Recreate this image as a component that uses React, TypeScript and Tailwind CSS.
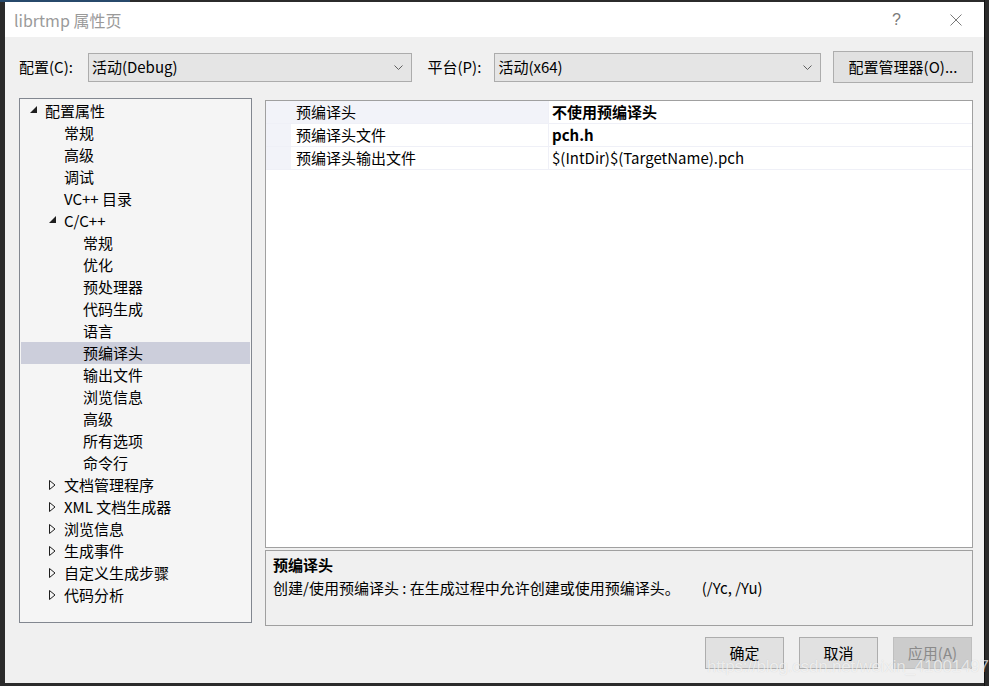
import React from "react";

const FONT = "font-['Noto_Sans_CJK_SC','Microsoft_YaHei',sans-serif]";

type Node = { label: string; level: number; toggle?: "open" | "closed"; selected?: boolean };

const tree: Node[] = [
  { label: "配置属性", level: 1, toggle: "open" },
  { label: "常规", level: 2 },
  { label: "高级", level: 2 },
  { label: "调试", level: 2 },
  { label: "VC++ 目录", level: 2 },
  { label: "C/C++", level: 2, toggle: "open" },
  { label: "常规", level: 3 },
  { label: "优化", level: 3 },
  { label: "预处理器", level: 3 },
  { label: "代码生成", level: 3 },
  { label: "语言", level: 3 },
  { label: "预编译头", level: 3, selected: true },
  { label: "输出文件", level: 3 },
  { label: "浏览信息", level: 3 },
  { label: "高级", level: 3 },
  { label: "所有选项", level: 3 },
  { label: "命令行", level: 3 },
  { label: "文档管理程序", level: 2, toggle: "closed" },
  { label: "XML 文档生成器", level: 2, toggle: "closed" },
  { label: "浏览信息", level: 2, toggle: "closed" },
  { label: "生成事件", level: 2, toggle: "closed" },
  { label: "自定义生成步骤", level: 2, toggle: "closed" },
  { label: "代码分析", level: 2, toggle: "closed" },
];

const props = [
  { name: "预编译头", value: "不使用预编译头", bold: true, active: true },
  { name: "预编译头文件", value: "pch.h", bold: true },
  { name: "预编译头输出文件", value: "$(IntDir)$(TargetName).pch" },
];

function Toggle({ kind }: { kind?: "open" | "closed" }) {
  if (kind === "open")
    return (
      <svg width={8} height={8} viewBox="0 0 8 8" className="-mt-[2px]">
        <polygon points="7,0 7,7 0,7" fill="#1e1e1e" />
      </svg>
    );
  if (kind === "closed")
    return (
      <svg width={7} height={10} viewBox="0 0 7 10">
        <polygon points="0.5,0.5 6,5 0.5,9.5" fill="none" stroke="#1e1e1e" strokeWidth={1} />
      </svg>
    );
  return null;
}

function Chevron() {
  return (
    <svg width={9} height={5} viewBox="0 0 9 5">
      <polyline points="0.5,0.5 4.5,4.5 8.5,0.5" fill="none" stroke="#5f5f5f" strokeWidth={1} />
    </svg>
  );
}

function Select({ value, width }: { value: string; width: string }) {
  return (
    <div className={`${width} h-[29px] bg-[#e5e5e5] border border-[#acacac] flex items-center justify-between pl-[3px] pr-[8px]`}>
      <span className="text-[15px] text-black">{value}</span>
      <Chevron />
    </div>
  );
}

function Button({ label, disabled, width }: { label: string; disabled?: boolean; width: string }) {
  return (
    <div
      className={`${width} h-[32px] border flex items-center justify-center text-[15px] ${
        disabled ? "bg-[#cccccc] border-[#bfbfbf] text-[#8a8a8a]" : "bg-[#e1e1e1] border-[#adadad] text-black"
      }`}
    >
      {label}
    </div>
  );
}

export default function App() {
  return (
    <div className={`relative w-[989px] h-[686px] overflow-hidden bg-[#2b2b2b] pt-[2px] pl-[5px] ${FONT}`}>
      {/* background window bits */}
      <div className="absolute left-0 top-0 w-[130px] h-[2px] bg-[#27496b]" />
      <div className="absolute left-[984px] top-0 w-px h-[686px] bg-[#111111]" />

      <div className="w-[979px] h-[681px] flex flex-col bg-[#f0f0f0]">
        {/* title bar */}
        <div className="h-[35px] bg-white flex items-center justify-between pl-[9px] pr-[22px] shrink-0">
          <span className="text-[16px] text-[#9a9a9a]">librtmp 属性页</span>
          <div className="flex items-center gap-[49px] text-[#7a7a7a]">
            <span className="text-[16px] font-['Liberation_Sans',sans-serif] font-light">?</span>
            <svg width={12} height={12} viewBox="0 0 12 12">
              <path d="M0.5 0.5L11.5 11.5M11.5 0.5L0.5 11.5" stroke="#7a7a7a" strokeWidth={1} />
            </svg>
          </div>
        </div>

        <div className="flex-1 flex flex-col pl-[14px] pr-[11px] pt-[15px]">
          {/* config row */}
          <div className="h-[30px] flex items-center text-[15px] text-black">
            <span className="w-[69px]">配置(C):</span>
            <Select value="活动(Debug)" width="w-[324px]" />
            <span className="w-[67px] ml-[16px]">平台(P):</span>
            <Select value="活动(x64)" width="w-[327px]" />
            <div className="ml-[12px]">
              <Button label="配置管理器(O)..." width="w-[140px]" />
            </div>
          </div>

          <div className="flex mt-[16px] gap-[13px]">
            {/* tree */}
            <div className="w-[233px] h-[525px] border border-[#828790] bg-[#f5f5f5] pt-[1px]">
              {tree.map((n, i) => (
                <div
                  key={i}
                  className={`h-[22px] mx-px flex items-center text-[15px] text-black ${n.selected ? "bg-[#cccedb]" : ""}`}
                >
                  <div className={n.level === 1 ? "w-[9px]" : n.level === 2 ? "w-[28px]" : "w-[47px]"} />
                  <div className="w-[15px] flex items-center">
                    <Toggle kind={n.toggle} />
                  </div>
                  <span>{n.label}</span>
                </div>
              ))}
            </div>

            {/* grid + description */}
            <div className="flex-1 flex flex-col pt-[2px]">
              <div className="h-[448px] border border-[#a0a0a0] bg-white">
                {props.map((p, i) => (
                  <div key={i} className="h-[23px] flex border-b border-[#eff0f7] text-[15px] text-black">
                    <div className="w-[25px] bg-[#f2f3f9]" />
                    <div
                      className={`w-[258px] flex items-center pl-[5px] border-r border-[#eff0f7] ${p.active ? "bg-[#f2f3f9]" : ""}`}
                    >
                      {p.name}
                    </div>
                    <div className={`flex-1 flex items-center pl-[3px] ${p.bold ? "font-bold" : ""}`}>{p.value}</div>
                  </div>
                ))}
              </div>
              <div className="mt-[2px] h-[76px] border border-[#a0a0a0] bg-[#f0f0f0] px-[7px] pt-[3px] text-[15px] text-black">
                <div className="font-bold h-[22px] flex items-center">预编译头</div>
                <div className="h-[24px] flex items-center">
                  <span>创建/使用预编译头 : 在生成过程中允许创建或使用预编译头。</span>
                  <span className="ml-[22px]">(/Yc, /Yu)</span>
                </div>
              </div>
            </div>
          </div>

          {/* buttons */}
          <div className="flex justify-end gap-[15px] mt-[11px] mr-[1px]">
            <Button label="确定" width="w-[79px]" />
            <Button label="取消" width="w-[79px]" />
            <Button label="应用(A)" disabled width="w-[79px]" />
          </div>
        </div>
      </div>

      {/* watermark */}
      <div className="absolute left-[707px] top-[654px] text-[17px] text-white/70 font-['Liberation_Sans',sans-serif] tracking-[-0.2px] [text-shadow:0_0_1px_rgba(0,0,0,0.15)]">
        https://blog.csdn.net/weixin_41001497
      </div>
    </div>
  );
}
